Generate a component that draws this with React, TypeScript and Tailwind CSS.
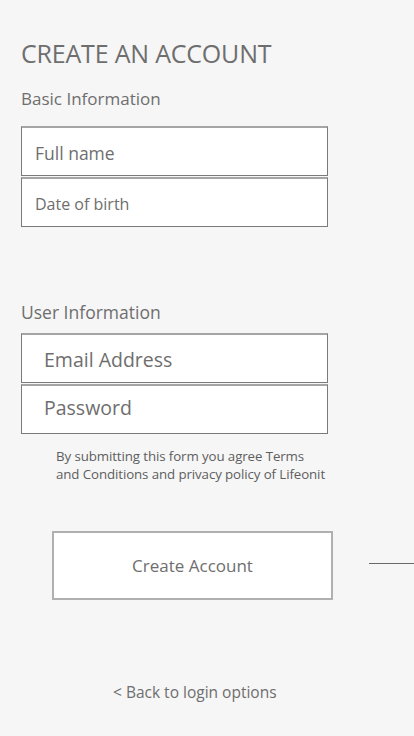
import React from "react";

function Field({ label, size }: { label: string; size: string }) {
  return (
    <div className="h-[50px] bg-white border border-[#7a7a7a] border-t-2 border-t-[#a5a5a5] flex items-center">
      <span className={size}>{label}</span>
    </div>
  );
}

export default function App() {
  return (
    <div
      className="relative w-[414px] h-[736px] bg-[#f6f6f6] text-[#6e6e6e] overflow-hidden"
      style={{ fontFamily: '"Open Sans", "Noto Sans", sans-serif' }}
    >
      <div className="pl-[21px] pt-[37px]">
        <h1 className="text-[25px] leading-[32px] tracking-[-0.2px]">CREATE AN ACCOUNT</h1>
        <h2 className="mt-[19px] text-[17px] leading-[22px]">Basic Information</h2>

        {/* Basic info fields */}
        <div className="mt-[16px] w-[307px] flex flex-col gap-[1px]">
          <Field label="Full name" size="pl-[13px] pt-[4px] text-[17.5px]" />
          <Field label="Date of birth" size="pl-[13px] pt-[2px] text-[16px]" />
        </div>

        <h2 className="mt-[74px] text-[17.5px] leading-[22px]">User Information</h2>

        {/* User info fields */}
        <div className="mt-[10px] w-[307px] flex flex-col gap-[1px]">
          <Field label="Email Address" size="pl-[22px] pt-[2px] text-[19.5px]" />
          <Field label="Password" size="pl-[22px] pb-[4px] text-[19.5px]" />
        </div>

        <p className="mt-[13px] ml-[35px] whitespace-nowrap text-[13.3px] leading-[18px] text-[#5e5e5e] tracking-[-0.1px]">
          By submitting this form you agree Terms
          <br />
          and Conditions and privacy policy of Lifeonit
        </p>

        <button className="mt-[48px] ml-[31px] w-[281px] h-[69px] bg-white border-2 border-[#b0b0b0] text-[17px] text-[#6e6e6e]">
          Create Account
        </button>

        <div className="mt-[82px] ml-[92px] text-[15.5px] leading-[20px]">&lt; Back to login options</div>
      </div>

      {/* decorative line to the right of the button */}
      <div className="absolute left-[369px] top-[563px] w-[45px] h-px bg-[#6a6a6a]" />
    </div>
  );
}
